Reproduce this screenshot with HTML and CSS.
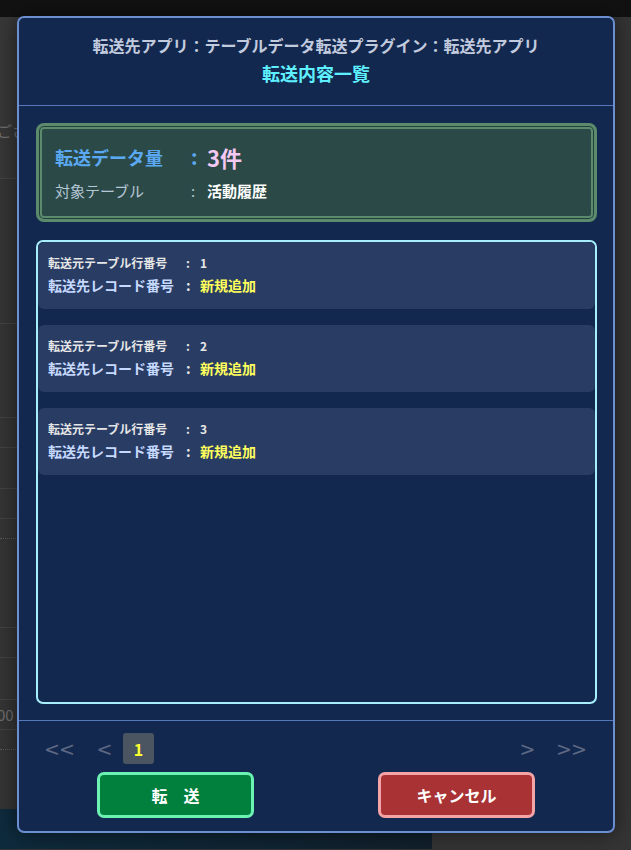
FILE: index.html
```html
<!DOCTYPE html>
<html lang="ja">
<head>
<meta charset="utf-8">
<title>転送内容一覧</title>
<link rel="stylesheet" href="styles.css">
</head>
<body>
<div class="topbar"></div>
<div class="page">
  <div class="page-row page-row--r1"><span class="page-text">ござ</span></div>
  <div class="page-row page-row--r2"></div>
  <div class="page-row page-row--r3"></div>
  <div class="page-row page-row--r4"></div>
  <div class="page-row page-row--r5"></div>
  <div class="page-row page-row--r4"></div>
  <div class="page-row page-row--dotted"></div>
  <div class="page-row page-row--r8"></div>
  <div class="page-row page-row--r4"></div>
  <div class="page-row page-row--r10"></div>
  <div class="page-row page-row--r11"><span class="page-text">00</span></div>
  <div class="page-row page-row--dotted"></div>
  <div class="page-strip"></div>
</div>

<div class="modal">
  <div class="modal-header">
    <div class="title-sub">転送先アプリ：テーブルデータ転送プラグイン：転送先アプリ</div>
    <div class="title-main">転送内容一覧</div>
  </div>

  <div class="modal-body">
    <div class="summary">
      <div class="summary-row summary-row--count">
        <span class="summary-label">転送データ量</span>
        <span class="summary-colon">:</span>
        <span class="summary-value">3件</span>
      </div>
      <div class="summary-row summary-row--table">
        <span class="summary-label">対象テーブル</span>
        <span class="summary-colon">:</span>
        <span class="summary-value">活動履歴</span>
      </div>
    </div>

    <div class="list">
      <div class="item">
        <div class="item-row item-row--src"><span class="item-label">転送元テーブル行番号</span><span class="item-colon">:</span><span class="item-value">1</span></div>
        <div class="item-row item-row--dst"><span class="item-label">転送先レコード番号</span><span class="item-colon">:</span><span class="item-value">新規追加</span></div>
      </div>
      <div class="item">
        <div class="item-row item-row--src"><span class="item-label">転送元テーブル行番号</span><span class="item-colon">:</span><span class="item-value">2</span></div>
        <div class="item-row item-row--dst"><span class="item-label">転送先レコード番号</span><span class="item-colon">:</span><span class="item-value">新規追加</span></div>
      </div>
      <div class="item">
        <div class="item-row item-row--src"><span class="item-label">転送元テーブル行番号</span><span class="item-colon">:</span><span class="item-value">3</span></div>
        <div class="item-row item-row--dst"><span class="item-label">転送先レコード番号</span><span class="item-colon">:</span><span class="item-value">新規追加</span></div>
      </div>
    </div>
  </div>

  <div class="modal-footer">
    <div class="pager">
      <div class="pager-group">
        <span class="pg pg--first">&lt;&lt;</span>
        <span class="pg pg--prev">&lt;</span>
        <span class="pg pg--current">1</span>
      </div>
      <div class="pager-group">
        <span class="pg pg--next">&gt;</span>
        <span class="pg pg--last">&gt;&gt;</span>
      </div>
    </div>
    <div class="actions">
      <button class="btn btn--ok">転　送</button>
      <button class="btn btn--cancel">キャンセル</button>
    </div>
  </div>
</div>
</body>
</html>
```

FILE: styles.css
```css
* { box-sizing: border-box; }

html, body {
  margin: 0;
  padding: 0;
}

body {
  width: 631px;
  height: 850px;
  overflow: hidden;
  background: #353535;
  font-family: "Noto Sans CJK JP", "Noto Sans", sans-serif;
  position: relative;
}

.topbar {
  height: 17px;
  background: #121212;
}

/* Dimmed page behind the modal */
.page {
  width: 300px;
  display: flex;
  flex-direction: column;
}

.page-row {
  border-bottom: 1px solid #444444;
  display: flex;
  align-items: center;
}
.page-row--r1 { height: 162px; align-items: flex-start; padding-top: 104px; background: #383838; }
.page-row--r2 { height: 145px; }
.page-row--r3 { height: 94px; }
.page-row--r4 { height: 30px; }
.page-row--r5 { height: 41px; }
.page-row--r8 { height: 89px; }
.page-row--r10 { height: 42px; }
.page-row--r11 { height: 30px; }
.page-row--dotted { height: 20px; border-bottom: 1px dotted #5a5a5a; }

.page-text {
  color: #707070;
  font-size: 15px;
  line-height: 20px;
  margin-left: -3px;
}

.page-strip {
  margin-top: 59px;
  width: 432px;
  height: 40px;
  background: linear-gradient(90deg, #0e2b3d, #11202c);
}

/* Modal */
.modal {
  position: absolute;
  left: 17px;
  top: 16px;
  width: 598px;
  height: 817px;
  background: #13284f;
  border: 2px solid #6b8fd0;
  border-radius: 7px;
  box-shadow: 0 0 22px rgba(0, 0, 0, 0.55);
  display: flex;
  flex-direction: column;
}

.modal-header {
  height: 88px;
  padding-top: 16px;
  border-bottom: 1px solid #5677bb;
  text-align: center;
}

.title-sub {
  color: #c2cbde;
  font-size: 16px;
  font-weight: bold;
  line-height: 22px;
}

.title-main {
  margin-top: 4px;
  color: #5ff0ff;
  font-size: 18px;
  font-weight: bold;
  line-height: 26px;
}

.modal-body {
  padding: 17px 16px 16px 17px;
  border-bottom: 1px solid #5677bb;
  display: flex;
  flex-direction: column;
  gap: 18px;
}

/* Summary */
.summary {
  height: 99px;
  background: #2b4a47;
  border: 3px solid #5b8a6c;
  border-radius: 8px;
  box-shadow: inset 0 0 0 1px #22403b, inset 0 0 0 3px #5b8a6c;
  padding: 16px 16px 0 16px;
  display: flex;
  flex-direction: column;
  gap: 7px;
}

.summary-row {
  display: grid;
  grid-template-columns: 136px 16px auto;
  align-items: center;
}

.summary-row--count { line-height: 30px; }
.summary-row--count .summary-label {
  color: #5aa9f2;
  font-size: 18px;
  font-weight: bold;
}
.summary-row--count .summary-colon {
  color: #5aa9f2;
  font-size: 20px;
  font-weight: bold;
}
.summary-row--count .summary-value {
  color: #f3c8f3;
  font-size: 22px;
  font-weight: bold;
}

.summary-row--table { line-height: 24px; }
.summary-row--table .summary-label {
  color: #b5c6d6;
  font-size: 15px;
}
.summary-row--table .summary-colon {
  color: #b5c6d6;
  font-size: 15px;
}
.summary-row--table .summary-value {
  color: #ffffff;
  font-size: 15px;
  font-weight: bold;
}

/* List */
.list {
  height: 464px;
  border: 2px solid #a6eefc;
  border-radius: 7px;
  background: #13284f;
  display: flex;
  flex-direction: column;
  gap: 16px;
  overflow: hidden;
}

.item {
  height: 67px;
  flex: none;
  background: #283c64;
  border-radius: 6px;
  padding: 11px 10px 0 10px;
  display: flex;
  flex-direction: column;
  gap: 1px;
}

.item-row {
  display: grid;
  grid-template-columns: 138px 14px auto;
  align-items: center;
}

.item-row--src {
  line-height: 20px;
  font-size: 12px;
  font-weight: bold;
  color: #e6e6e6;
}

.item-row--dst {
  line-height: 22px;
  font-size: 14px;
  font-weight: bold;
}
.item-row--dst .item-label { color: #c6d9ff; }
.item-row--dst .item-colon { color: #e6e6e6; }
.item-row--dst .item-value { color: #ffff5c; }

/* Footer */
.modal-footer {
  flex: 1;
  padding: 12px 26px 0 18px;
  display: flex;
  flex-direction: column;
  gap: 8px;
}

.pager {
  display: flex;
  justify-content: space-between;
  height: 31px;
}

.pager-group {
  display: flex;
  align-items: center;
}

.pg {
  width: 32px;
  height: 31px;
  display: flex;
  align-items: center;
  justify-content: center;
  color: #5d6884;
  font-family: "DejaVu Sans", sans-serif;
  font-size: 19px;
  letter-spacing: -1px;
}

.pg--first { margin-left: 6px; }
.pg--prev { margin-left: 13px; }
.pg--current {
  margin-left: 3px;
  width: 31px;
  background: #4a5561;
  border-radius: 3px;
  color: #ffff33;
  font-family: "Noto Sans CJK JP", sans-serif;
  font-size: 16px;
  font-weight: bold;
  letter-spacing: 0;
}
.pg--last { margin-left: 12px; }

.actions {
  display: flex;
  justify-content: center;
  gap: 124px;
  padding-left: 8px;
}

.btn {
  width: 157px;
  height: 46px;
  border-radius: 7px;
  border: 3px solid;
  font-family: "Noto Sans CJK JP", sans-serif;
  font-size: 16px;
  font-weight: bold;
  color: #ffffff;
  padding: 0;
}

.btn--ok {
  background: #00803c;
  border-color: #6cf3b4;
}

.btn--cancel {
  background: #a83234;
  border-color: #f4a4a6;
}
```
